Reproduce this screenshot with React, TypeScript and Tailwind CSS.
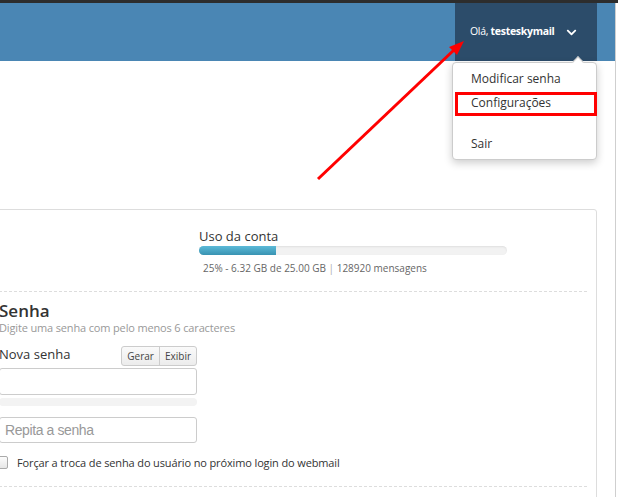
import { FaChevronDown } from "react-icons/fa";

export default function App() {
  return (
    <div className="relative w-[618px] h-[497px] overflow-hidden bg-white font-['Open_Sans',sans-serif] text-[#333]">
      {/* top window strip */}
      <div className="h-[3px] bg-[#2d2d2d]" />

      <div className="flex h-[494px] overflow-hidden">
        <div className="flex-1 flex flex-col">
          {/* Header */}
          <header className="shrink-0 h-[58px] bg-[#4a86b4] flex justify-end pr-[18px]">
            <div className="w-[142px] bg-[#2c4c6a] flex items-center pl-[15px] text-white text-[10.5px] tracking-[-0.3px]">
              <span>
                Olá, <span className="font-bold">testeskymail</span>
              </span>
              <FaChevronDown className="ml-[11px] mt-[1px]" size={11} />
            </div>
          </header>

          {/* Content */}
          <main className="shrink-0 pt-[148px] pr-[18px]">
            <div className="-ml-[32px] pl-[30px] pr-[9px] border border-[#ddd] rounded-[3px] pb-[40px]">
              {/* Account usage */}
              <section className="pt-[17px] pb-[16px] pl-[200px]">
                <h3 className="text-[13px] leading-[18px] text-[#333]">Uso da conta</h3>
                <div className="mt-[1px] w-[308px] h-[9px] rounded-full bg-[#f2f2f2] shadow-[inset_0_1px_2px_rgba(0,0,0,0.08)] overflow-hidden">
                  <div className="h-full w-1/4 bg-linear-to-b from-[#5cbad8] to-[#3893b2]" />
                </div>
                <p className="mt-[6px] pl-[4px] text-[10px] leading-[14px] text-[#666]">
                  25% - 6.32 GB de 25.00 GB <span className="text-[#aaa]">|</span> 128920 mensagens
                </p>
              </section>

              {/* Password */}
              <section className="border-t border-dashed border-[#ddd] pt-[9px] pb-[17px]">
                <h2 className="text-[17px] leading-[20px] font-semibold text-[#333]">Senha</h2>
                <p className="text-[11px] leading-[14px] tracking-[-0.15px] text-[#999]">
                  Digite uma senha com pelo menos 6 caracteres
                </p>

                <div className="mt-[11px] w-[198px] flex justify-between items-start">
                  <span className="text-[13px] leading-[16px]">Nova senha</span>
                  <div className="flex h-[20px] rounded-[3px] border border-[#ccc] bg-linear-to-b from-[#fafafa] to-[#ececec] text-[10px] text-[#444]">
                    <button className="px-[5px] leading-[18px]">Gerar</button>
                    <button className="px-[5px] leading-[18px] border-l border-[#ccc]">Exibir</button>
                  </div>
                </div>
                <input
                  className="mt-[2px] block w-[198px] h-[27px] rounded-[3px] border border-[#ccc] bg-white outline-none"
                  type="password"
                />
                <div className="mt-[3px] w-[198px] h-[8px] rounded-full bg-[#f3f3f3]" />
                <input
                  className="mt-[11px] block w-[198px] h-[26px] rounded-[3px] border border-[#ccc] bg-white px-[5px] text-[14px] font-['Liberation_Sans',Arial,sans-serif] tracking-[-0.4px] placeholder:text-[#999] outline-none"
                  placeholder="Repita a senha"
                />
                <label className="mt-[13px] flex items-center gap-[9px] -ml-[4px] text-[11px] leading-[13px] tracking-[-0.13px] text-[#333]">
                  <span className="w-[13px] h-[13px] rounded-[2px] border border-[#aaa] bg-linear-to-b from-[#fcfcfc] to-[#e6e6e6]" />
                  Forçar a troca de senha do usuário no próximo login do webmail
                </label>
              </section>
              <div className="border-t border-dashed border-[#ddd]" />
            </div>
          </main>
        </div>
        {/* window edge */}
        <div className="w-[3px] border-l border-[#cfcfcf] bg-white" />
      </div>

      {/* User dropdown */}
      <div className="absolute left-[452px] top-[62px] w-[145px] h-[98px] rounded-[4px] border border-[#ccc] bg-white shadow-[0_3px_8px_rgba(0,0,0,0.2)] pt-[4px] text-[12px] text-[#333]">
        <div className="absolute -top-[5px] left-[121px] w-[8px] h-[8px] rotate-45 bg-white border-l border-t border-[#ccc]" />
        <div className="h-[24px] leading-[24px] pl-[18px]">Modificar senha</div>
        <div className="h-[24px] leading-[24px] pl-[18px]">Configurações</div>
        <div className="h-[17px]" />
        <div className="h-[24px] leading-[24px] pl-[18px]">Sair</div>
      </div>

      {/* Annotation: highlight box */}
      <div className="absolute left-[455px] top-[92px] w-[142px] h-[24px] border-[3px] border-[#ff0000]" />

      {/* Annotation: arrow */}
      <svg className="absolute inset-0 pointer-events-none" width="618" height="497">
        <line x1="318" y1="179" x2="455" y2="49" stroke="#ff0000" strokeWidth="3" />
        <polygon points="464,41 457,55 449,47" fill="#ff0000" />
      </svg>
    </div>
  );
}
